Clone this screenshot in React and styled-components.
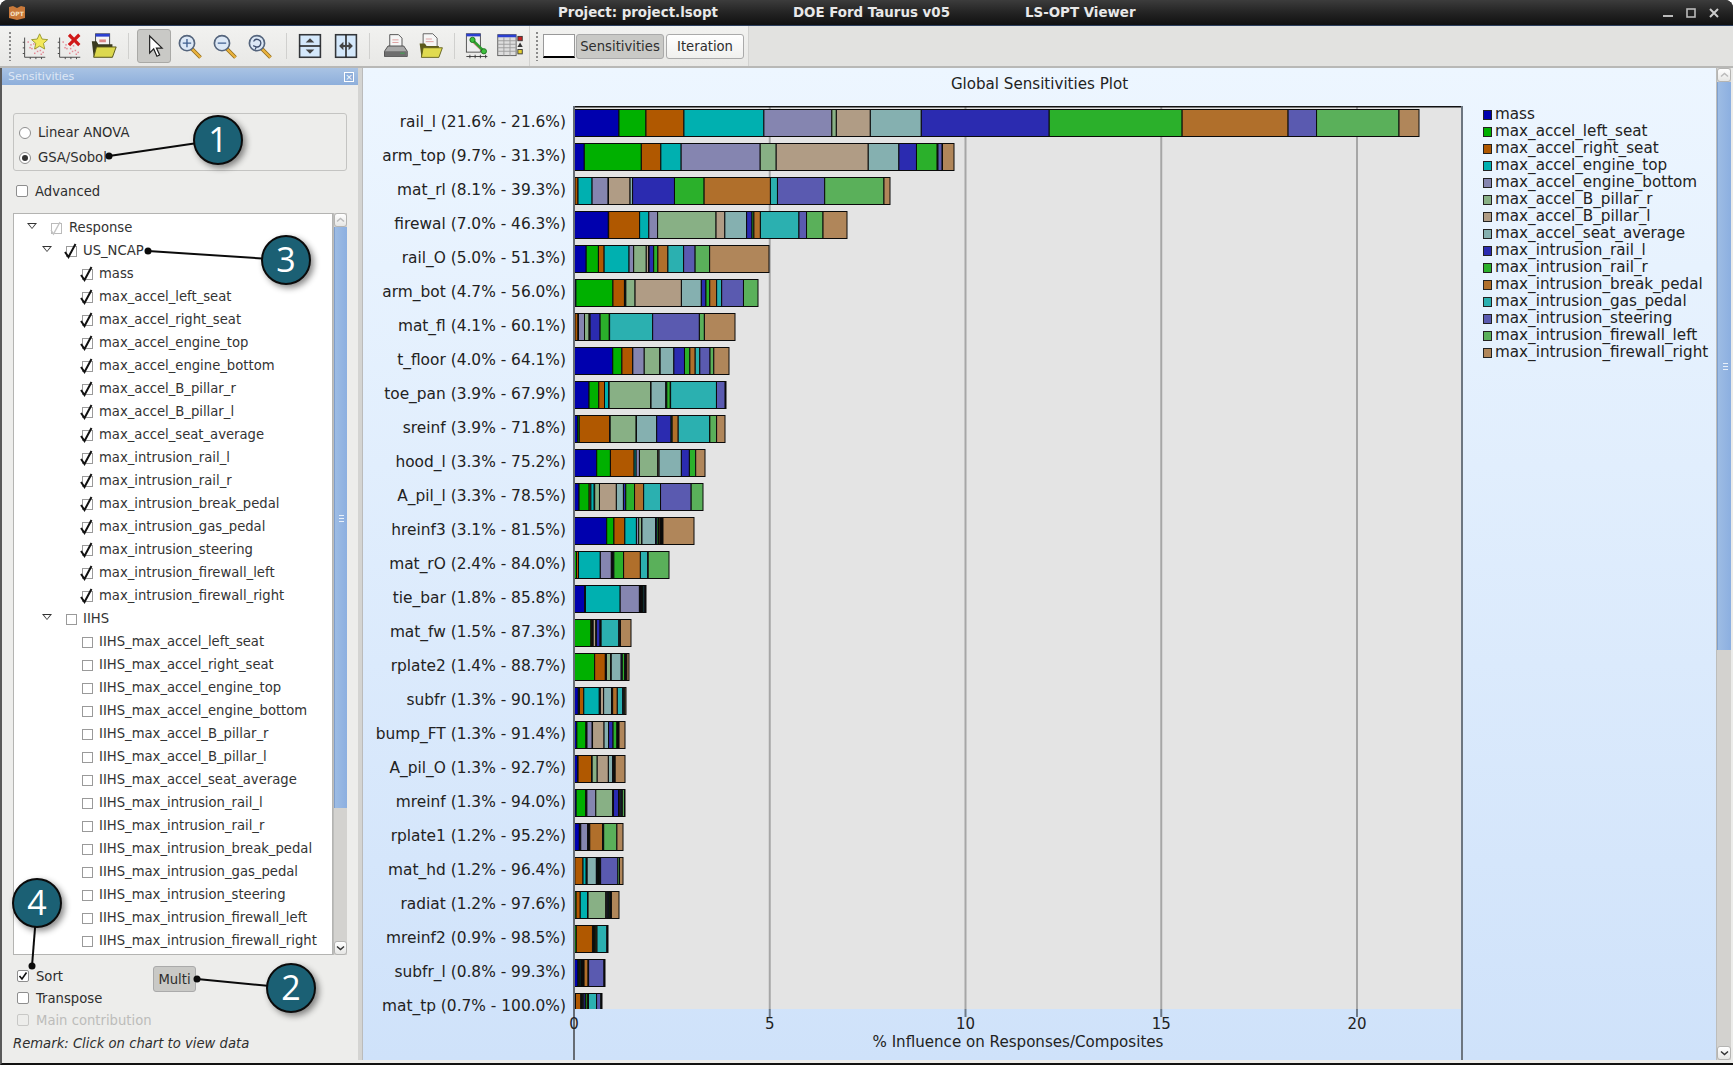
import React from "react";
import styled, { createGlobalStyle } from "styled-components";

const GlobalStyle = createGlobalStyle`
  html, body { margin: 0; padding: 0; background: #fff; }
  body { font-family: "DejaVu Sans", sans-serif; }
`;

const COLORS = [
  "#0000ae", "#00b000", "#b05800", "#00b0b0", "#8585b0",
  "#88b085", "#b09c85", "#85b0b0", "#2b2bb0", "#2bb02b",
  "#b06f2b", "#2bb0b0", "#5a5ab0", "#5ab05a", "#b0865a",
];

const RESPONSES = [
  "mass", "max_accel_left_seat", "max_accel_right_seat", "max_accel_engine_top",
  "max_accel_engine_bottom", "max_accel_B_pillar_r", "max_accel_B_pillar_l",
  "max_accel_seat_average", "max_intrusion_rail_l", "max_intrusion_rail_r",
  "max_intrusion_break_pedal", "max_intrusion_gas_pedal", "max_intrusion_steering",
  "max_intrusion_firewall_left", "max_intrusion_firewall_right",
];

const IIHS = RESPONSES.slice(1).map((r) => "IIHS_" + r);

// widths in pixels, one per response in legend order; end = right edge of the bar
const ROWS = [
  ["rail_l (21.6% - 21.6%)", 845, [45, 27, 38, 80, 68, 4.5, 34, 51, 128, 133, 106, 0, 28.5, 82.5, 20]],
  ["arm_top (9.7% - 31.3%)", 380, [10.3, 57, 19.5, 20.3, 79, 16, 92, 30.6, 17.6, 20.7, 0.5, 0.3, 4.2, 0.3, 11.5]],
  ["mat_rl (8.1% - 39.3%)", 316, [0.5, 0.5, 3, 14, 16, 0.3, 21.5, 2.5, 41.7, 29.5, 66, 7, 47, 59, 6]],
  ["firewal (7.0% - 46.3%)", 273, [34.4, 0.3, 31, 9.2, 8.8, 58.5, 8.8, 21.8, 5.4, 1.9, 6.5, 38.6, 7.6, 16.5, 24]],
  ["rail_O (5.0% - 51.3%)", 195, [12.2, 12.2, 5.7, 24.9, 4.6, 12.6, 2.3, 0.5, 4.6, 4.2, 10, 15.7, 11.5, 14.5, 59.3]],
  ["arm_bot (4.7% - 56.0%)", 184, [1.9, 37, 11.5, 1.1, 0.3, 9.2, 46.3, 19.9, 4.6, 3.8, 6.9, 5, 21.8, 14.5, 0]],
  ["mat_fl (4.1% - 60.1%)", 161, [0.5, 0.5, 3, 0.5, 6, 4.6, 0.5, 0.5, 10, 9.2, 0.3, 43, 46.7, 5, 30.6]],
  ["t_floor (4.0% - 64.1%)", 155, [39, 9.2, 10.7, 0.3, 11.5, 15.7, 0.3, 13.8, 10.7, 5.4, 5.4, 4.6, 10.3, 3.8, 15.3]],
  ["toe_pan (3.9% - 67.9%)", 152, [15, 9.7, 5.7, 4.3, 0.3, 41.5, 0.3, 14.7, 1, 3.5, 0.3, 45.7, 8.7, 0.3, 0.5]],
  ["sreinf (3.9% - 71.8%)", 151, [3.7, 1.5, 30, 0.3, 0.3, 25.7, 0.3, 20, 14.3, 1, 6, 31, 0.3, 6.7, 8.3]],
  ["hood_l (3.3% - 75.2%)", 131, [22.7, 13.7, 23.7, 2, 3.3, 18.3, 1.3, 22.3, 8, 6.3, 0, 0, 0, 0, 9.3]],
  ["A_pil_l (3.3% - 78.5%)", 129, [5, 10, 1.7, 3.3, 0.5, 4.7, 16.7, 7, 2.3, 8.7, 9, 16.7, 30.3, 11.7, 0]],
  ["hreinf3 (3.1% - 81.5%)", 120, [33, 7.3, 11, 11.7, 2.3, 3, 0.3, 13.7, 1.5, 1.5, 1.5, 1, 1, 1, 31.3]],
  ["mat_rO (2.4% - 84.0%)", 95, [0.5, 2, 2, 21.7, 11, 0.5, 0.5, 0.5, 1, 9.7, 16.7, 7.3, 0.5, 20.7, 0]],
  ["tie_bar (1.8% - 85.8%)", 72, [10.7, 0.3, 0.3, 34.3, 19, 0.5, 0.5, 0.5, 0.5, 0.5, 0.5, 1.5, 1, 0.5, 0.5]],
  ["mat_fw (1.5% - 87.3%)", 57, [0.3, 15.7, 1, 0.3, 0.3, 0.5, 2.5, 0.5, 3.5, 0.5, 0.5, 16.7, 1, 0.5, 10]],
  ["rplate2 (1.4% - 88.7%)", 55, [0.3, 19, 10, 0.5, 0.5, 4, 0.5, 9.3, 1, 2.3, 0.5, 0.5, 0.5, 0.5, 2]],
  ["subfr (1.3% - 90.1%)", 52, [4, 1, 4, 14.3, 0.5, 0.5, 3, 7.3, 0.5, 0.5, 4.3, 5, 1, 1, 1]],
  ["bump_FT (1.3% - 91.4%)", 51, [2.7, 8.7, 0.5, 0.5, 5, 0.3, 11, 4.3, 4.3, 3.7, 0.5, 0.5, 0.5, 0.5, 5.7]],
  ["A_pil_O (1.3% - 92.7%)", 51, [3.7, 0.3, 13.3, 0.3, 0.3, 5, 11, 4.3, 0.5, 0.5, 0.5, 0.3, 0.3, 0.3, 9.7]],
  ["mreinf (1.3% - 94.0%)", 51, [2, 9, 0.5, 0.5, 8.3, 15.7, 0.3, 0.5, 4.7, 0.5, 1, 1, 1, 2, 0.5]],
  ["rplate1 (1.2% - 95.2%)", 49, [5, 0.5, 0.5, 0.3, 6.3, 0.3, 0.5, 0.5, 0.5, 0.3, 12, 0.5, 0.5, 12.3, 5.7]],
  ["mat_hd (1.2% - 96.4%)", 49, [0.5, 0.3, 7.7, 3, 0.3, 0.3, 0.3, 8.7, 1, 1, 1, 1, 16.3, 1.5, 3.3]],
  ["radiat (1.2% - 97.6%)", 45, [0.5, 1.5, 4, 7, 0.5, 17, 1, 1, 1, 1, 0.5, 0.3, 0.3, 0.3, 7.3]],
  ["mreinf2 (0.9% - 98.5%)", 34, [0.5, 1.5, 14.3, 0.3, 0.5, 0.3, 0.3, 0.3, 0.3, 1, 1, 8.7, 0.5, 0.5, 0]],
  ["subfr_l (0.8% - 99.3%)", 31, [4, 1, 1, 1, 0.5, 0.5, 0.5, 0.5, 0.5, 0.5, 4, 0.5, 15.3, 0.5, 0.5]],
  ["mat_tp (0.7% - 100.0%)", 28, [0.3, 1, 4.7, 0.3, 0.3, 0.5, 0.5, 1, 1.5, 1.5, 1, 7, 3.7, 0.5, 0.5]],
];

const Window = styled.div`
  position: relative;
  width: 1733px;
  height: 1065px;
  overflow: hidden;
  display: flex;
  flex-direction: column;
  background: #111;
  border-radius: 8px 8px 0 0;
`;

const TitleBar = styled.div`
  height: 25px;
  flex-shrink: 0;
  display: flex;
  align-items: center;
  padding: 0 14px 0 8px;
  background: linear-gradient(#3c3c3c, #262626 45%, #101010);
`;

const TitleText = styled.span`
  color: #e8e8e8;
  font-size: 13.4px;
  font-weight: 700;
  white-space: nowrap;
  margin-left: ${(p) => p.$left}px;
`;

const WindowButtons = styled.div`
  margin-left: auto;
  display: flex;
  align-items: center;
  gap: 13px;
`;

const BlueLine = styled.div`
  height: 1px;
  flex-shrink: 0;
  background: #2c3f5e;
`;

const Toolbar = styled.div`
  height: 42px;
  flex-shrink: 0;
  box-sizing: border-box;
  display: flex;
  background: #e2e2e0;
  border-bottom: 2px solid #b8b8b6;
`;

const ToolSection = styled.div`
  display: flex;
  align-items: center;
  height: 100%;
  padding-left: ${(p) => p.$left}px;
  padding-right: ${(p) => p.$right}px;
  background: linear-gradient(#f2f2f0, #e8e8e6);
  border-right: 1px solid #d2d2d0;
`;

const Grip = styled.div`
  width: 4px;
  height: 30px;
  flex-shrink: 0;
  margin-right: ${(p) => p.$right}px;
  background-image: radial-gradient(#8a8a8a 0.8px, transparent 1px);
  background-size: 4px 4px;
`;

const ToolGroup = styled.div`
  display: flex;
  align-items: center;
  gap: ${(p) => p.$gap}px;
`;

const ToolSep = styled.div`
  width: 1px;
  height: 26px;
  flex-shrink: 0;
  background: #d0d0ce;
  margin-left: ${(p) => p.$left}px;
  margin-right: ${(p) => p.$right}px;
`;

const ToolButton = styled.div`
  width: 34px;
  height: 34px;
  box-sizing: border-box;
  flex-shrink: 0;
  display: flex;
  align-items: center;
  justify-content: center;
  border-radius: 3px;
  background: ${(p) => (p.$active ? "#c9c9c6" : "transparent")};
  border: 1px solid ${(p) => (p.$active ? "#a9a9a6" : "transparent")};
`;

const ColorBox = styled.div`
  width: 32px;
  height: 24px;
  box-sizing: border-box;
  flex-shrink: 0;
  margin-right: 1px;
  background: #fff;
  border: 1px solid #999;
  border-bottom: 2px solid #000;
`;

const TabButton = styled.div`
  box-sizing: border-box;
  height: 25px;
  width: ${(p) => p.$width}px;
  flex-shrink: 0;
  margin-right: 2px;
  display: flex;
  align-items: center;
  justify-content: center;
  overflow: hidden;
  white-space: nowrap;
  font-size: 13.2px;
  color: #2e2e2e;
  border-radius: 3px;
  border: 1px solid #aaa;
  background: ${(p) => (p.$active ? "#c9c9c6" : "linear-gradient(#fff, #f0f0ee)")};
`;

const Main = styled.div`
  flex: 1;
  min-height: 0;
  display: flex;
  background: #ececea;
  border-left: 2px solid #5a5a5a;
  border-bottom: 2px solid #111;
  padding-bottom: 3px;
`;

const Sidebar = styled.div`
  width: 356px;
  flex-shrink: 0;
  display: flex;
  flex-direction: column;
  background: #ededeb;
`;

const DockTitle = styled.div`
  height: 17px;
  flex-shrink: 0;
  display: flex;
  align-items: center;
  justify-content: space-between;
  padding: 0 4px 0 6px;
  font-size: 11px;
  color: #dde7f5;
  background: linear-gradient(#a9c3e4, #8eafdb);
`;

const DockClose = styled.div`
  width: 10px;
  height: 10px;
  box-sizing: border-box;
  border: 1px solid #fff;
  color: #fff;
  font-size: 9px;
  line-height: 8px;
  text-align: center;
  background: #8eafdb;
`;

const SideBody = styled.div`
  flex: 1;
  display: flex;
  flex-direction: column;
  padding: 0 11px;
`;

const GroupBox = styled.div`
  margin-top: 28px;
  height: 58px;
  box-sizing: border-box;
  flex-shrink: 0;
  padding: 6px 0 0 5px;
  border: 1px solid #c4c4c2;
  border-radius: 3px;
`;

const RadioRow = styled.div`
  height: 25px;
  display: flex;
  align-items: center;
  gap: 7px;
  font-size: 13.2px;
  color: #2e2e2e;
`;

const RadioDot = styled.span`
  width: 12px;
  height: 12px;
  box-sizing: border-box;
  border-radius: 50%;
  border: 1px solid #8e8e8e;
  background: #fff;
  display: flex;
  align-items: center;
  justify-content: center;
  &::after {
    content: "";
    width: 6px;
    height: 6px;
    border-radius: 50%;
    background: ${(p) => (p.$on ? "#333" : "transparent")};
  }
`;

const CheckRow = styled.div`
  height: ${(p) => p.$h}px;
  margin-top: ${(p) => p.$top || 0}px;
  padding-left: ${(p) => p.$left}px;
  flex-shrink: 0;
  display: flex;
  align-items: center;
  gap: 7px;
  font-size: 13.2px;
  color: ${(p) => (p.$disabled ? "#bcbcba" : "#2e2e2e")};
`;

const CheckBox = styled.span`
  width: 12px;
  height: 12px;
  box-sizing: border-box;
  flex-shrink: 0;
  display: flex;
  border: 1px solid ${(p) => (p.$disabled ? "#c8c8c6" : "#8e8e8e")};
  border-radius: 2px;
  background: ${(p) => (p.$disabled ? "transparent" : "#fff")};
`;

const TreeFrame = styled.div`
  margin-top: 13px;
  height: 742px;
  flex-shrink: 0;
  display: flex;
`;

const TreeList = styled.div`
  flex: 1;
  box-sizing: border-box;
  background: #fff;
  border: 1px solid #b4b4b2;
  padding-top: 2px;
  overflow: hidden;
`;

const TreeRow = styled.div`
  height: 23px;
  display: flex;
  align-items: center;
  padding-left: ${(p) => p.$pad}px;
  font-size: 13.2px;
  color: #333;
  white-space: nowrap;
`;

const Expander = styled.span`
  width: 0;
  height: 0;
  margin-right: ${(p) => p.$right}px;
  border-left: 5.5px solid transparent;
  border-right: 5.5px solid transparent;
  border-top: 6px solid #333;
  margin-top: -3px;
  position: relative;
  &::after {
    content: "";
    position: absolute;
    left: -3.5px;
    top: -5px;
    border-left: 3.5px solid transparent;
    border-right: 3.5px solid transparent;
    border-top: 4px solid #fff;
  }
`;

const TreeBox = styled.svg`
  width: 14px;
  height: 16px;
  flex-shrink: 0;
  margin-left: -2px;
  margin-right: ${(p) => p.$right}px;
  overflow: visible;
`;

const Scrollbar = styled.div`
  width: ${(p) => p.$width}px;
  flex-shrink: 0;
  display: flex;
  flex-direction: column;
  background: #d3d2cf;
  border-left: 1px solid #bdbdbb;
  box-sizing: border-box;
`;

const ScrollArrow = styled.div`
  height: 14px;
  flex-shrink: 0;
  display: flex;
  align-items: center;
  justify-content: center;
  box-sizing: border-box;
  background: linear-gradient(#fff, #e6e6e4);
  border: 1px solid #b4b4b2;
  border-radius: 3px;
`;

const ScrollThumb = styled.div`
  height: ${(p) => p.$h}px;
  flex-shrink: 0;
  position: relative;
  background: linear-gradient(90deg, #9dbce4, #8cafe0);
  border-left: 1px solid #7f9fcc;
  &::after {
    content: "";
    position: absolute;
    left: 50%;
    top: 50%;
    width: 5px;
    height: 7px;
    margin: -3px 0 0 -2px;
    background: repeating-linear-gradient(#e8f0fa 0 1px, transparent 1px 3px);
  }
`;

const ScrollTrack = styled.div`
  flex: 1;
`;

const BottomRow = styled.div`
  display: flex;
  margin-top: 10px;
`;

const BottomChecks = styled.div`
  width: 140px;
  flex-shrink: 0;
`;

const MultiButton = styled.div`
  width: 43px;
  height: 26px;
  margin-top: 1px;
  box-sizing: border-box;
  display: flex;
  align-items: center;
  justify-content: center;
  font-size: 13.2px;
  color: #2e2e2e;
  border: 1px solid #aaa;
  border-radius: 3px;
  background: #c9c9c6;
`;

const Remark = styled.div`
  margin-top: 3px;
  height: 20px;
  line-height: 20px;
  font-size: 13.2px;
  font-style: italic;
  color: #2e2e2e;
`;

const Splitter = styled.div`
  width: 5px;
  flex-shrink: 0;
  background: #d4d4d2;
  border-right: 1px solid #bbb;
  box-sizing: border-box;
`;

const ChartPane = styled.div`
  flex: 1;
  min-width: 0;
  display: flex;
  flex-direction: column;
  background: linear-gradient(#edf6ff, #cfe2fa);
`;

const ChartTitle = styled.div`
  height: 31px;
  margin-bottom: 7px;
  flex-shrink: 0;
  display: flex;
  align-items: center;
  justify-content: center;
  font-size: 15.1px;
  color: #222;
`;

const ChartBody = styled.div`
  flex: 1;
  min-height: 0;
  display: flex;
`;

const LabelColumn = styled.div`
  width: 211px;
  flex-shrink: 0;
  padding: 0 8px 0 0;
  box-sizing: border-box;
  text-align: right;
`;

const BarLabel = styled.div`
  height: 34px;
  line-height: 33px;
  font-size: 15.4px;
  color: #222;
  white-space: nowrap;
`;

const PlotSvg = styled.svg`
  width: 889px;
  height: 954px;
  flex-shrink: 0;
  display: block;
  overflow: visible;
`;

const Legend = styled.div`
  margin-left: 20px;
  margin-top: -1px;
`;

const LegendRow = styled.div`
  height: 17px;
  display: flex;
  align-items: center;
  gap: 3px;
  font-size: 15.2px;
  color: #222;
  white-space: nowrap;
`;

const LegendSwatch = styled.span`
  width: 9px;
  height: 10px;
  box-sizing: border-box;
  margin-top: 3px;
  flex-shrink: 0;
  border: 1px solid #222;
  background: ${(p) => p.$color};
`;

const Overlay = styled.svg`
  position: absolute;
  left: 0;
  top: 0;
  width: 1733px;
  height: 1065px;
  pointer-events: none;
`;

const Badge = styled.circle`
  fill: #1b6074;
  stroke: #0b0b0b;
  stroke-width: 2;
  filter: drop-shadow(3px 3px 3px rgba(0, 0, 0, 0.45));
`;

const BadgeNumber = styled.text`
  fill: #fff;
  font-family: "Open Sans", sans-serif;
  font-size: 34px;
  text-anchor: middle;
`;

// ---- toolbar drawings ----

function ScatterBase() {
  const dots = [[9, 11], [12, 14], [15, 13], [13, 18], [17, 18], [19, 21], [22, 20], [16, 23], [23, 24], [11, 17], [20, 15], [25, 22]];
  return (
    <g>
      <path d="M6 7V28H28" fill="none" stroke="#444" strokeWidth="1" />
      <path d="M4 12h2M4 18h2M4 24h2M12 28v2M18 28v2M24 28v2" stroke="#444" strokeWidth="1" />
      {dots.map(([x, y], i) => (
        <rect key={i} x={x} y={y} width="1.6" height="1.6" fill="#e58a96" />
      ))}
    </g>
  );
}

function NewPlotIcon() {
  return (
    <svg width="30" height="30" viewBox="0 0 32 32">
      <ScatterBase />
      <path d="M22 3l2.6 5.6 6 .6-4.5 4 1.3 6-5.4-3.1-5.4 3.1 1.3-6-4.5-4 6-.6z" fill="#f3e85a" stroke="#9a9a30" strokeWidth="1" />
    </svg>
  );
}

function DeletePlotIcon() {
  return (
    <svg width="30" height="30" viewBox="0 0 32 32">
      <ScatterBase />
      <path d="M16 4l11 11M27 4L16 15" stroke="#d01818" strokeWidth="3.4" />
    </svg>
  );
}

function FolderIcon() {
  return (
    <svg width="30" height="30" viewBox="0 0 32 32">
      <rect x="7" y="3" width="15" height="20" fill="#f4f4f4" stroke="#444" />
      <rect x="7" y="3" width="15" height="3" fill="#2b3fd0" />
      <rect x="11" y="9" width="7" height="3" fill="#d88" />
      <path d="M3 11h5l2 3h15v14H5z" fill="#3a3a20" />
      <path d="M5 28l3-11h21l-4 11z" fill="#dcd84e" stroke="#55541a" />
    </svg>
  );
}

function PointerIcon() {
  return (
    <svg width="21" height="25" viewBox="0 0 26 30">
      <path d="M7 2v21l5-5 4 9 3.4-1.5-4-8.5h7z" fill="#fff" stroke="#222" strokeWidth="1.5" />
    </svg>
  );
}

function MagnifierIcon({ kind }) {
  return (
    <svg width="27" height="27" viewBox="0 0 32 32">
      <path d="M18 18l11 11" stroke="#8d6a1e" strokeWidth="4.5" />
      <path d="M18 18l11 11" stroke="#eab23c" strokeWidth="2.8" />
      <circle cx="13" cy="12" r="9" fill="#dce8f6" stroke="#55657d" strokeWidth="2" />
      {kind === "in" && <path d="M8 12h10M13 7v10" stroke="#3f5f8f" strokeWidth="1.6" />}
      {kind === "out" && <path d="M8 12h10" stroke="#3f5f8f" strokeWidth="1.6" />}
      {kind === "fit" && <path d="M9 10a4.500 4.500 0 1 1 3 6.400M8.500 15l3.500 1.500-1 3" fill="none" stroke="#3f4f6f" strokeWidth="1.5" />}
    </svg>
  );
}

function SplitIcon({ vertical }) {
  return (
    <svg width="26" height="30" viewBox="0 0 30 30">
      <rect x="3" y="2" width="24" height="26" fill="#d4e8fb" stroke="#33363a" strokeWidth="1.8" />
      {vertical ? (
        <g>
          <path d="M3 15h24" stroke="#222" strokeWidth="1.8" />
          <path d="M15 6l-5 5h10zM15 24l-5-5h10z" fill="#444" />
        </g>
      ) : (
        <g>
          <path d="M15 2v26" stroke="#222" strokeWidth="1.8" />
          <path d="M7 15l5-5v10zM23 15l-5-5v10z" fill="#444" />
          <path d="M9 15h12" stroke="#444" strokeWidth="2.4" />
        </g>
      )}
    </svg>
  );
}

function PrinterIcon() {
  return (
    <svg width="28" height="28" viewBox="0 0 32 32">
      <path d="M10 3h10l4 4v12H10z" fill="#f6f6f6" stroke="#444" />
      <path d="M13 9h7M13 12h7" stroke="#d99" strokeWidth="1" />
      <path d="M8 16h18l4 6v6H4v-6z" fill="#a8a8a8" stroke="#444" />
      <rect x="4.500" y="22" width="25" height="6" fill="#6e6e6e" />
      <rect x="22" y="23.500" width="5" height="1.500" fill="#4c9a5a" />
    </svg>
  );
}

function OpenDocIcon() {
  return (
    <svg width="28" height="30" viewBox="0 0 32 32">
      <path d="M7 2h11l5 5v15H7z" fill="#f6f6f6" stroke="#555" />
      <path d="M10 8h7M10 11h9" stroke="#d99" strokeWidth="1" />
      <path d="M3 13h6l2 3h14v12H5z" fill="#5c5a1c" />
      <path d="M5 29l2-11h22l-4 11z" fill="#e0db50" stroke="#5c5a1c" />
    </svg>
  );
}

function LinkIcon() {
  return (
    <svg width="28" height="30" viewBox="0 0 32 32">
      <rect x="5" y="2" width="16" height="21" fill="#eee" stroke="#444" />
      <rect x="5" y="2" width="16" height="3" fill="#2b3fd0" />
      <path d="M5 28h24M9 26v4M15 26v4M21 26v4M27 26v4" stroke="#333" strokeWidth="1" />
      <path d="M11 10l15 14" stroke="#d88" strokeWidth="2" />
      <path d="M12 9l13 13" stroke="#2e9c2e" strokeWidth="3" />
      <circle cx="12" cy="9" r="3" fill="#3cc03c" stroke="#1c6c1c" />
      <circle cx="25" cy="22" r="3" fill="#3cc03c" stroke="#1c6c1c" />
    </svg>
  );
}

function TableIcon() {
  return (
    <svg width="28" height="28" viewBox="0 0 32 32">
      <rect x="2" y="3" width="21" height="24" fill="#ddd" stroke="#555" />
      <rect x="2" y="3" width="21" height="3" fill="#2b3fd0" />
      <path d="M9 6v21M16 6v21M2 10h21M2 14h21M2 18h21M2 22h21" stroke="#999" strokeWidth="1" />
      <rect x="25" y="5" width="5" height="5" fill="#c82020" stroke="#333" />
      <path d="M27.500 12l3 5h-6z" fill="#333" />
      <rect x="25" y="20" width="5" height="5" fill="#e4d030" stroke="#333" />
    </svg>
  );
}

function Tick({ color = "#111" }) {
  return (
    <svg width="10" height="10" viewBox="0 0 10 10">
      <path d="M1.500 5l2.500 3L8.500 1.500" fill="none" stroke={color} strokeWidth="1.6" />
    </svg>
  );
}

function TreeCheck({ checked, ghost, right }) {
  return (
    <TreeBox $right={right} viewBox="0 0 14 16">
      <rect x="2.500" y="3.500" width="10" height="10" fill="#fff" stroke={ghost ? "#bbb" : "#9a9a9a"} />
      {checked && <path d="M1 9l3.500 5L11.500 1" fill="none" stroke="#111" strokeWidth="2" />}
      {ghost && <path d="M2 10l2.500 4L11 2" fill="none" stroke="#c4c4c4" strokeWidth="1.4" />}
    </TreeBox>
  );
}

function ArrowGlyph({ down }) {
  return (
    <svg width="9" height="6" viewBox="0 0 9 6">
      <path d={down ? "M1 1.500l3.500 3 3.500-3" : "M1 4.500l3.500-3 3.500 3"} fill="none" stroke={down ? "#333" : "#bbb"} strokeWidth="1.500" />
    </svg>
  );
}

function VScroll({ width, thumb }) {
  return (
    <Scrollbar $width={width}>
      <ScrollArrow><ArrowGlyph /></ScrollArrow>
      <ScrollThumb $h={thumb} />
      <ScrollTrack />
      <ScrollArrow><ArrowGlyph down /></ScrollArrow>
    </Scrollbar>
  );
}

function Plot() {
  const scale = 39.15;
  const x0 = 574;
  return (
    <PlotSvg viewBox="574 106 889 954">
      <defs>
        <clipPath id="plot-clip">
          <rect x="574" y="106" width="889" height="903" />
        </clipPath>
      </defs>
      <rect x="574" y="106" width="888" height="903" fill="#e4e4e4" />
      {[5, 10, 15, 20].map((v) => (
        <g key={v}>
          <rect x={x0 + v * scale - 1} y="107" width="2" height="902" fill="#a6a6a6" />
          <rect x={x0 + v * scale - 1} y="1009" width="2" height="8" fill="#6d7a88" />
        </g>
      ))}
      <g clipPath="url(#plot-clip)">
        {ROWS.map(([name, end, widths], r) => {
          const sum = widths.reduce((a, b) => a + b, 0);
          let x = x0;
          return (
            <g key={name}>
              {widths.map((w, i) => {
                if (!w) return null;
                const width = (w * end) / sum;
                const rect = (
                  <rect key={i} x={x} y={109.5 + r * 34} width={width} height="27" fill={COLORS[i]} stroke="#0a0a0a" strokeWidth="1" />
                );
                x += width;
                return rect;
              })}
            </g>
          );
        })}
      </g>
      <rect x="574" y="106" width="889" height="1.500" fill="#111" />
      <rect x="573" y="106" width="2" height="954" fill="#666c74" />
      <rect x="1461" y="106" width="2" height="954" fill="#6d7680" />
      {[0, 5, 10, 15, 20].map((v) => (
        <text key={v} x={x0 + v * scale} y="1029" textAnchor="middle" fontSize="15" fill="#222">
          {v}
        </text>
      ))}
      <text x="1018" y="1047" textAnchor="middle" fontSize="15.1" fill="#222">
        % Influence on Responses/Composites
      </text>
    </PlotSvg>
  );
}

const CALLOUTS = [
  { n: 1, cx: 218, cy: 140, dx: 109, dy: 156 },
  { n: 2, cx: 291, cy: 988, dx: 197, dy: 979 },
  { n: 3, cx: 286, cy: 260, dx: 148, dy: 251 },
  { n: 4, cx: 37, cy: 903, dx: 32, dy: 966 },
];

function Callouts() {
  return (
    <Overlay viewBox="0 0 1733 1065">
      {CALLOUTS.map((c) => (
        <g key={c.n}>
          <line x1={c.dx} y1={c.dy} x2={c.cx} y2={c.cy} stroke="#0b0b0b" strokeWidth="2" />
          <circle cx={c.dx} cy={c.dy} r="3.500" fill="#0b0b0b" />
          <Badge cx={c.cx} cy={c.cy} r="24" />
          <BadgeNumber x={c.cx} y={c.cy + 12}>{c.n}</BadgeNumber>
        </g>
      ))}
    </Overlay>
  );
}

export default function App() {
  return (
    <>
      <GlobalStyle />
      <Window>
        <TitleBar>
          <svg width="18" height="16" viewBox="0 0 18 16">
            <path d="M1 2l4-1 4 2 4-2 4 1v11l-8 2-8-2z" fill="#c9793a" />
            <text x="9" y="11" textAnchor="middle" fontSize="6" fontWeight="700" fill="#f4e2c4">OPT</text>
          </svg>
          <TitleText $left={532}>Project: project.lsopt</TitleText>
          <TitleText $left={75}>DOE Ford Taurus v05</TitleText>
          <TitleText $left={75}>LS-OPT Viewer</TitleText>
          <WindowButtons>
            <svg width="10" height="10" viewBox="0 0 10 10"><rect y="7" width="10" height="2" fill="#bbb" /></svg>
            <svg width="10" height="10" viewBox="0 0 10 10"><rect x="1" y="1" width="8" height="8" fill="none" stroke="#bbb" strokeWidth="1.600" /></svg>
            <svg width="10" height="10" viewBox="0 0 10 10"><path d="M1 1l8 8M9 1l-8 8" stroke="#ccc" strokeWidth="2" /></svg>
          </WindowButtons>
        </TitleBar>
        <BlueLine />
        <Toolbar>
          <ToolSection $left={8} $right={2}>
            <Grip $right={5} />
            <ToolGroup $gap={1}>
              <ToolButton><NewPlotIcon /></ToolButton>
              <ToolButton><DeletePlotIcon /></ToolButton>
              <ToolButton><FolderIcon /></ToolButton>
            </ToolGroup>
            <ToolSep $left={7} $right={8} />
            <ToolGroup $gap={1}>
              <ToolButton $active><PointerIcon /></ToolButton>
              <ToolButton><MagnifierIcon kind="in" /></ToolButton>
              <ToolButton><MagnifierIcon kind="out" /></ToolButton>
              <ToolButton><MagnifierIcon kind="fit" /></ToolButton>
            </ToolGroup>
            <ToolSep $left={10} $right={6} />
            <ToolGroup $gap={2}>
              <ToolButton><SplitIcon vertical /></ToolButton>
              <ToolButton><SplitIcon /></ToolButton>
            </ToolGroup>
            <ToolSep $left={6} $right={8} />
            <ToolGroup $gap={2}>
              <ToolButton><PrinterIcon /></ToolButton>
              <ToolButton><OpenDocIcon /></ToolButton>
            </ToolGroup>
            <ToolSep $left={6} $right={4} />
            <ToolGroup $gap={0}>
              <ToolButton><LinkIcon /></ToolButton>
              <ToolButton><TableIcon /></ToolButton>
            </ToolGroup>
          </ToolSection>
          <ToolSection $left={5} $right={2}>
            <Grip $right={4} />
            <ColorBox />
            <TabButton $active $width={88}>Sensitivities</TabButton>
            <TabButton $width={78}>Iteration</TabButton>
          </ToolSection>
        </Toolbar>
        <Main>
          <Sidebar>
            <DockTitle>
              Sensitivities
              <DockClose>×</DockClose>
            </DockTitle>
            <SideBody>
              <GroupBox>
                <RadioRow><RadioDot />Linear ANOVA</RadioRow>
                <RadioRow><RadioDot $on />GSA/Sobol</RadioRow>
              </GroupBox>
              <CheckRow $h={18} $top={11} $left={3}>
                <CheckBox />Advanced
              </CheckRow>
              <TreeFrame>
                <TreeList>
                  <TreeRow $pad={13}>
                    <Expander $right={14} /><TreeCheck ghost right={6} />Response
                  </TreeRow>
                  <TreeRow $pad={28}>
                    <Expander $right={14} /><TreeCheck checked right={5} />US_NCAP
                  </TreeRow>
                  {RESPONSES.map((r) => (
                    <TreeRow key={r} $pad={68}><TreeCheck checked right={5} />{r}</TreeRow>
                  ))}
                  <TreeRow $pad={28}>
                    <Expander $right={14} /><TreeCheck right={5} />IIHS
                  </TreeRow>
                  {IIHS.map((r) => (
                    <TreeRow key={r} $pad={68}><TreeCheck right={5} />{r}</TreeRow>
                  ))}
                </TreeList>
                <VScroll width={14} thumb={581} />
              </TreeFrame>
              <BottomRow>
                <BottomChecks>
                  <CheckRow $h={22} $left={4}><CheckBox><Tick /></CheckBox>Sort</CheckRow>
                  <CheckRow $h={22} $left={4}><CheckBox />Transpose</CheckRow>
                  <CheckRow $h={22} $left={4} $disabled><CheckBox $disabled />Main contribution</CheckRow>
                </BottomChecks>
                <MultiButton>Multi</MultiButton>
              </BottomRow>
              <Remark>Remark: Click on chart to view data</Remark>
            </SideBody>
          </Sidebar>
          <Splitter />
          <ChartPane>
            <ChartTitle>Global Sensitivities Plot</ChartTitle>
            <ChartBody>
              <LabelColumn>
                {ROWS.map(([name]) => (
                  <BarLabel key={name}>{name}</BarLabel>
                ))}
              </LabelColumn>
              <Plot />
              <Legend>
                {RESPONSES.map((r, i) => (
                  <LegendRow key={r}>
                    <LegendSwatch $color={COLORS[i]} />
                    {r}
                  </LegendRow>
                ))}
              </Legend>
            </ChartBody>
          </ChartPane>
          <VScroll width={15} thumb={568} />
          <div style={{ width: 2, flexShrink: 0 }} />
        </Main>
        <Callouts />
      </Window>
    </>
  );
}
